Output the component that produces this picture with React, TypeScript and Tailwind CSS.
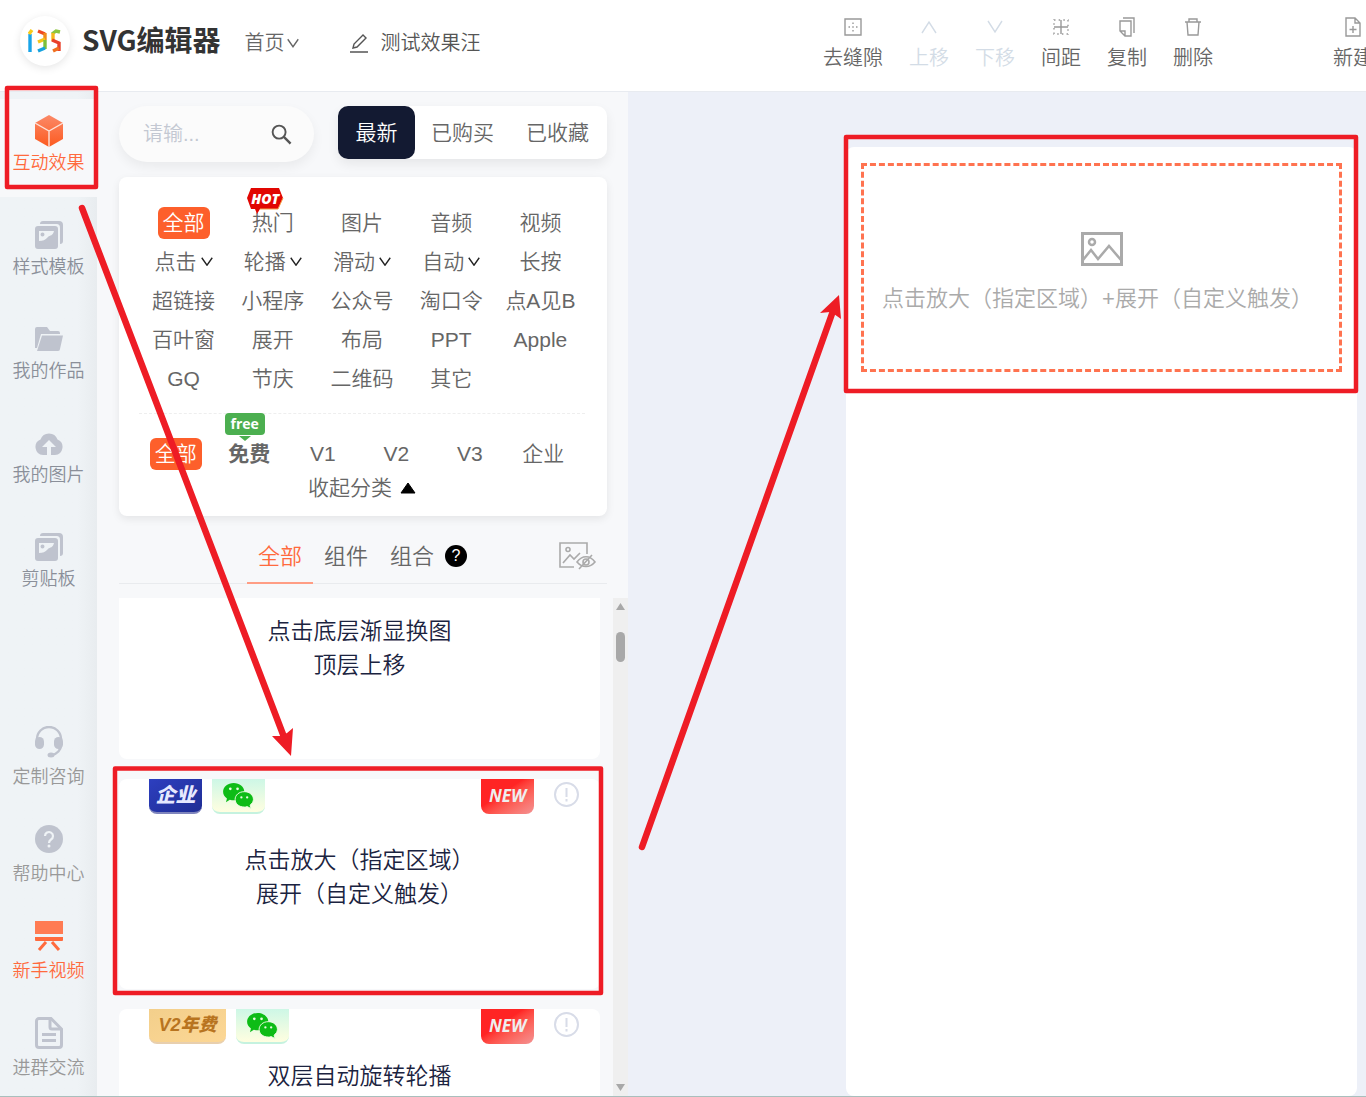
import { useState } from "react";
import type { ReactNode } from "react";
import clsx from "clsx";

const categories = [
  "全部", "热门", "图片", "音频", "视频",
  "点击", "轮播", "滑动", "自动", "长按",
  "超链接", "小程序", "公众号", "淘口令", "点A见B",
  "百叶窗", "展开", "布局", "PPT", "Apple",
  "GQ", "节庆", "二维码", "其它",
];
const withMenu = ["点击", "轮播", "滑动", "自动"];
const levels = ["全部", "免费", "V1", "V2", "V3", "企业"];
const sources = ["最新", "已购买", "已收藏"];
const kinds = ["全部", "组件", "组合"];

function Chevron({ className, up }: { className?: string; up?: boolean }) {
  return (
    <svg viewBox="0 0 16 12" fill="none" stroke="currentColor" strokeWidth="1.8" className={className}>
      <path d={up ? "M1 11 8 1l7 10" : "M1 1l7 10 7-10"} />
    </svg>
  );
}

function CubeIcon() {
  return (
    <svg width="28" height="32" viewBox="0 0 28 32">
      <defs>
        <linearGradient id="cube" x1="0" y1="0" x2="0" y2="1">
          <stop offset="0" stopColor="#fb8a68" />
          <stop offset="1" stopColor="#fc5a1f" />
        </linearGradient>
      </defs>
      <path d="M14 0 28 8v16l-14 8L0 24V8z" fill="url(#cube)" />
      <path d="M0 8l14 8 14-8M14 16v16" fill="none" stroke="#fde3da" strokeWidth="1.4" />
    </svg>
  );
}

function TemplateIcon() {
  return (
    <svg width="28" height="28" viewBox="0 0 28 28" fill="#bfc3ce">
      <path d="M8 0h16a4 4 0 0 1 4 4v16c0 2-1 3-3 3V7c0-3-1-4-4-4H5c0-2 1-3 3-3z" />
      <path
        fillRule="evenodd"
        d="M3 5h17a3 3 0 0 1 3 3v17a3 3 0 0 1-3 3H3a3 3 0 0 1-3-3V8a3 3 0 0 1 3-3zm1 5v10c4 0 6-1 9-4 2-2 5-1 6-6zm3.500 1.500a2 2 0 1 1 0 4 2 2 0 0 1 0-4z"
      />
    </svg>
  );
}

function FolderIcon() {
  return (
    <svg width="28" height="24" viewBox="0 0 28 24" fill="#bfc3ce">
      <path d="M0 21V2a2 2 0 0 1 2-2h10l3 4h8a2 2 0 0 1 2 2v1H6L2 21z" />
      <path d="M7 8.500h21l-3 13.500a2 2 0 0 1-2 2H2z" />
    </svg>
  );
}

function CloudIcon() {
  return (
    <svg width="28" height="23" viewBox="0 0 28 23" fill="#bfc3ce">
      <path d="M12 23H8A8 8 0 0 1 5.500 7.600 9 9 0 0 1 22.500 7.600 8 8 0 0 1 20 23h-4v-8h5l-7-7-7 7h5z" />
    </svg>
  );
}

function HeadsetIcon() {
  return (
    <svg width="28" height="32" viewBox="0 0 28 32" fill="#bfc3ce">
      <path d="M2 14v-1a12 12 0 0 1 24 0v6c0 5-4 9-9 10" fill="none" stroke="#bfc3ce" strokeWidth="2.4" />
      <rect y="11" width="9" height="12" rx="4.500" />
      <rect x="19" y="11" width="9" height="12" rx="4.500" />
      <ellipse cx="16" cy="29" rx="3.500" ry="2.500" />
    </svg>
  );
}

function HelpIcon() {
  return (
    <svg width="28" height="28" viewBox="0 0 28 28">
      <circle cx="14" cy="14" r="14" fill="#bfc3ce" />
      <path d="M10 11a4 4 0 1 1 6 3.500c-1.500 1-2 1.500-2 3.500" fill="none" stroke="#eff3f6" strokeWidth="2.200" />
      <circle cx="14" cy="21" r="1.500" fill="#eff3f6" />
    </svg>
  );
}

function BoardIcon() {
  return (
    <svg width="28" height="30" viewBox="0 0 28 30" fill="#ff6a3d">
      <path d="M0 0h28v13H0z" fill="#ff7b53" />
      <path d="M0 16h28v3a1 1 0 0 1-1 1H1a1 1 0 0 1-1-1z" />
      <path d="M11 21 4 29M17 21l7 8" stroke="#ff6a3d" strokeWidth="3" />
    </svg>
  );
}

function DocIcon() {
  return (
    <svg width="28" height="32" viewBox="0 0 28 32" fill="none" stroke="#bfc3ce" strokeWidth="3">
      <path d="M4 1.500h12L26.500 12v16a2.500 2.500 0 0 1-2.500 2.500H4A2.500 2.500 0 0 1 1.500 28V4A2.500 2.500 0 0 1 4 1.500z" />
      <path d="M15 2v8c0 1.500.5 2 2 2h9M7 17.500h14M7 23.500h14" />
    </svg>
  );
}

const mainNav = [
  { label: "互动效果", icon: <CubeIcon /> },
  { label: "样式模板", icon: <TemplateIcon /> },
  { label: "我的作品", icon: <FolderIcon /> },
  { label: "我的图片", icon: <CloudIcon /> },
  { label: "剪贴板", icon: <TemplateIcon /> },
];

const helpNav = [
  { label: "定制咨询", icon: <HeadsetIcon /> },
  { label: "帮助中心", icon: <HelpIcon /> },
  { label: "新手视频", icon: <BoardIcon />, hot: true },
  { label: "进群交流", icon: <DocIcon /> },
];

const tools = [
  {
    label: "去缝隙",
    icon: (
      <>
        <path d="M2 2h16v16H2z" />
        <path d="M10 5.500v9M5.500 10h9" strokeDasharray="1.500 2.250" />
      </>
    ),
  },
  { label: "上移", icon: <path d="M3 16 10 5l7 11" />, disabled: true },
  { label: "下移", icon: <path d="M3 4l7 11 7-11" />, disabled: true },
  {
    label: "间距",
    icon: (
      <>
        <path d="M10 3v14M3 10h14" />
        <path d="M3 3h14v14H3z" strokeDasharray="1.500 3.160" />
      </>
    ),
  },
  { label: "复制", icon: <path d="M6 1h11v15M3 4h11v15H8l-5-5zM3 14h5v5" /> },
  { label: "删除", icon: <path d="M2 5h16M6 5V2h8v3M4 5l1 13h10l1-13" /> },
];

function Logo() {
  return (
    <svg width="34" height="24" viewBox="0 0 34 24" fill="none" strokeWidth="3.400">
      <path d="M2 5v18" stroke="#18a4e8" />
      <path d="M1 5l3-4" stroke="#f7c91b" />
      <path d="M10 2l7 3" stroke="#ef4a23" />
      <path d="M17 4v7" stroke="#f08a1d" />
      <path d="M17 10l-7 3" stroke="#f5c518" />
      <path d="M17 11v9" stroke="#7cbf3a" />
      <path d="M17 19l-7 3" stroke="#16a2de" />
      <path d="M32 3l-4-1-4 3" stroke="#8cc63f" />
      <path d="M25 4v8" stroke="#f5b81c" />
      <path d="M24 11l7 3v8" stroke="#e9402b" />
      <path d="M31 19l-6 3" stroke="#f0701f" />
    </svg>
  );
}

function Header() {
  return (
    <header className="flex h-[92px] shrink-0 items-center overflow-hidden border-b border-[#e8ebf0] bg-white pb-1.5">
      <a href="#home" className="-mt-1 ml-5 flex items-center gap-3">
        <span className="flex size-[50px] items-center justify-center rounded-full bg-white shadow-[0_2px_8px_rgba(0,0,0,0.1)]">
          <Logo />
        </span>
        <span className="pb-1 font-['Noto_Sans_CJK_SC',sans-serif] text-[28px] leading-10 font-bold text-[#333]">
          SVG编辑器
        </span>
      </a>
      <button className="ml-6 flex items-center gap-0.5 text-[20px] text-[#666]">
        首页
        <Chevron className="h-2.5 w-3" />
      </button>
      <button className="ml-[50px] flex items-center gap-3 text-[20px] text-[#555]">
        <svg width="20" height="20" viewBox="0 0 20 20" fill="none" stroke="currentColor" strokeWidth="1.400">
          <path d="M1 19h18M4 15l1-4 9-9 3 3-9 9z" />
        </svg>
        测试效果汪
      </button>
      <div className="-mr-[7px] ml-auto flex shrink-0 gap-[26px] pt-1.5">
        {tools.map((tool) => (
          <button
            key={tool.label}
            disabled={tool.disabled}
            className={clsx(
              "flex flex-col items-center gap-[5px] text-[20px] leading-8",
              tool.disabled ? "text-[#d3dce6]" : "text-[#666]"
            )}
          >
            <svg
              width="20"
              height="20"
              viewBox="0 0 20 20"
              fill="none"
              stroke={tool.disabled ? "#d3dce6" : "#999"}
              strokeWidth="1.400"
            >
              {tool.icon}
            </svg>
            {tool.label}
          </button>
        ))}
        <button className="ml-[94px] flex flex-col items-center gap-[5px] text-[20px] leading-8 text-[#666]">
          <svg width="20" height="20" viewBox="0 0 20 20" fill="none" stroke="#999" strokeWidth="1.400">
            <path d="M3 1h9l5 5v13H3zM12 1v5h5M10 9v7M6.500 12.500h7" />
          </svg>
          新建
        </button>
      </div>
    </header>
  );
}

function Sidebar() {
  return (
    <nav className="flex w-[97px] shrink-0 flex-col bg-linear-to-r from-[#eff3f6] from-80% to-[#e8ecef] pt-[7px] pb-4">
      <div className="flex flex-col gap-1.5">
        {mainNav.map((item, i) => (
          <a
            key={item.label}
            href="#nav"
            className={clsx(
              "flex h-[98px] flex-col items-center gap-1 pt-4 text-[18px] leading-6",
              i === 0 ? "bg-[#f7f8fa] text-[#ff6a3d]" : "text-[#8a8f99]"
            )}
          >
            <span className="flex h-8 items-center">{item.icon}</span>
            {item.label}
          </a>
        ))}
      </div>
      <div className="mt-auto flex flex-col gap-[34px]">
        {helpNav.map((item) => (
          <a
            key={item.label}
            href="#help"
            className={clsx(
              "flex flex-col items-center gap-[7px] text-[18px] leading-6",
              item.hot ? "text-[#ff6a3d]" : "text-[#999]"
            )}
          >
            <span className="flex h-8 items-center">{item.icon}</span>
            {item.label}
          </a>
        ))}
      </div>
    </nav>
  );
}

function Filters() {
  const [category, setCategory] = useState("全部");
  const [level, setLevel] = useState("全部");

  return (
    <section className="mt-[15px] rounded-lg bg-white pt-[26px] pr-[22px] pb-[13px] pl-5 text-[21px] text-[#666] shadow-[0_3px_8px_rgba(0,0,0,0.08)]">
      <div className="grid grid-cols-5">
        {categories.map((name) => (
          <div key={name} className="relative flex h-[39px] items-center justify-center">
            <button
              onClick={() => setCategory(name)}
              className={clsx(
                "flex h-8 items-center rounded-md px-[5px] leading-8 whitespace-nowrap",
                category === name && "bg-[#fd5f2b] text-white"
              )}
            >
              {name}
              {withMenu.includes(name) && <Chevron className="ml-1 h-[9px] w-3 text-[#222]" />}
            </button>
            {name === "热门" && (
              <span className="absolute -top-[15px] left-[18px] flex h-6 w-[38px] justify-center">
                <svg width="38" height="26" viewBox="0 0 38 26" className="absolute top-0 left-0">
                  <path d="M5 0h28l4 10-5 11H14l-3 5-2-5H5L1 10z" fill="#e10602" />
                  <path d="M37 10l-5 11H14" fill="none" stroke="#f6a04a" />
                </svg>
                <b className="relative font-['Open_Sans',sans-serif] text-[14px] leading-[21px] font-extrabold text-white italic">
                  HOT
                </b>
              </span>
            )}
          </div>
        ))}
      </div>
      <div className="mt-[15px] grid grid-cols-6 border-t border-dashed border-[#eee] pt-5 pr-[5px]">
        {levels.map((name) => (
          <div key={name} className="relative flex h-[39px] items-center justify-center">
            <button
              onClick={() => setLevel(name)}
              className={clsx(
                "h-8 rounded-md px-[5px] leading-8 whitespace-nowrap",
                level === name && "bg-[#fd5f2b] text-white",
                name === "免费" && "font-bold"
              )}
            >
              {name}
            </button>
            {name === "免费" && (
              <span className="absolute -top-[21px] left-3 flex flex-col items-center">
                <b className="h-[22px] rounded-sm bg-[#4caf50] px-1.5 font-['Open_Sans',sans-serif] text-[14px] leading-[21px] font-bold text-white">
                  free
                </b>
                <svg width="12" height="6" viewBox="0 0 12 6">
                  <path d="M0 1h12L6 6z" fill="#4caf50" />
                </svg>
              </span>
            )}
          </div>
        ))}
      </div>
      <button className="mx-auto flex h-[30px] items-center gap-2">
        收起分类
        <svg width="16" height="12" viewBox="0 0 16 12">
          <path d="M8 1l7 10H1z" stroke="#000" strokeLinejoin="round" />
        </svg>
      </button>
    </section>
  );
}

function WechatBadge() {
  return (
    <span className="flex h-[35px] w-[53px] items-center justify-center rounded-b-lg border-b-2 border-[#c5f2df] bg-linear-to-b from-[#cdf7e6] to-[#fffee0]">
      <svg width="31" height="26" viewBox="0 0 32 27" fill="#0dbc16">
        <path d="M11 0c6 0 11 4 11 9S17 18 11 18c-1.500 0-2.500-.2-4-.6L3 20l1-4C1.500 14 0 12 0 9c0-5 5-9 11-9z" />
        <path
          d="M22 9c5.500 0 9.500 3.600 9.500 8 0 2.500-1.500 4.500-3.500 6l1 3.500-4-2c-1 .4-2 .5-3 .5-5.500 0-9.500-3.600-9.500-8s4-8 9.500-8z"
          stroke="#e9fbe0"
        />
        <g fill="#e9fbe0">
          <circle cx="7.500" cy="6" r="1.400" />
          <circle cx="15" cy="6" r="1.400" />
          <circle cx="19" cy="15" r="1.200" />
          <circle cx="25" cy="15" r="1.200" />
        </g>
      </svg>
    </span>
  );
}

function EffectCard({ badge, children }: { badge: ReactNode; children: ReactNode }) {
  return (
    <article className="flex h-[210px] shrink-0 flex-col rounded-lg bg-white">
      <div className="flex items-start gap-2.5 pr-[21px] pl-[30px]">
        {badge}
        <WechatBadge />
        <b className="ml-auto h-[35px] w-[53px] rounded-b-lg bg-linear-to-br from-[#ff2424] from-40% to-[#f39292] font-['Open_Sans',sans-serif] text-[17px] leading-[33px] font-bold text-[#eee] italic">
          NEW
        </b>
        <button aria-label="详情" className="mt-[3px] ml-2.5">
          <svg width="25" height="25" viewBox="0 0 25 25" fill="none" stroke="#d8dce8" strokeWidth="2">
            <circle cx="12.500" cy="12.500" r="11.500" />
            <path d="M12.500 6v9M12.500 17v2.500" />
          </svg>
        </button>
      </div>
      {children}
    </article>
  );
}

function EffectPanel() {
  const [source, setSource] = useState("最新");
  const [kind, setKind] = useState("全部");

  return (
    <aside className="flex w-[531px] shrink-0 flex-col bg-[#f7f8fa] pt-3.5 pl-[22px]">
      <div className="pr-[21px]">
        <div className="flex items-start justify-between">
          <label className="flex h-14 w-[195px] items-center rounded-full bg-[#fbfbfb] pr-[22px] pl-6 shadow-[0_5px_12px_rgba(0,0,0,0.06)]">
            <input
              aria-label="搜索"
              placeholder="请输..."
              className="min-w-0 flex-1 text-[20px] placeholder-[#c3c8d2] outline-none"
            />
            <svg width="21" height="21" viewBox="0 0 22 22" fill="none" stroke="#555" strokeWidth="2">
              <circle cx="8.500" cy="8.500" r="6.800" />
              <path d="M13.500 13.500l7 7" strokeWidth="2.500" />
            </svg>
          </label>
          <div className="flex h-[53px] w-[269px] rounded-[10px] bg-white pr-0.5 text-[21px] text-[#666] shadow-[0_5px_12px_rgba(0,0,0,0.07)]">
            {sources.map((name) => (
              <button
                key={name}
                onClick={() => setSource(name)}
                className={clsx(
                  "rounded-[10px]",
                  source === name ? "w-[77px] bg-[#131a32] text-white" : "flex-1"
                )}
              >
                {name}
              </button>
            ))}
          </div>
        </div>

        <Filters />

        <div className="mt-3 flex h-14 items-center border-b border-[#e9ebee] pl-32 text-[22px] text-[#666]">
          {kinds.map((name) => (
            <button
              key={name}
              onClick={() => setKind(name)}
              className={clsx(
                "-mb-px h-14 border-b-2 px-[11px] pt-0.5",
                kind === name ? "border-[#ff9d84] text-[#ff6a3d]" : "border-transparent"
              )}
            >
              {name}
            </button>
          ))}
          <span className="flex size-[22px] items-center justify-center rounded-full bg-black text-[16px] leading-none text-white">
            ?
          </span>
          <button aria-label="隐藏图片" className="mr-[11px] ml-auto">
            <svg width="37" height="28" viewBox="0 0 37 28" fill="none" stroke="#aaa" strokeWidth="1.600">
              <path d="M15 25H1V1h27v11M4 21l7-8 4 4 6-6" />
              <circle cx="9" cy="7.500" r="2" />
              <path d="M18 20c5-7 13-7 18 0-5 6-13 6-18 0zM33 13 20 27" />
              <circle cx="27" cy="20" r="3" />
            </svg>
          </button>
        </div>
      </div>

      <div className="mt-3.5 flex min-h-0 flex-1">
        <div className="flex flex-1 flex-col gap-5 overflow-hidden pr-[13px] text-center text-[23px] leading-[34px] text-[#1b2340]">
          <article className="h-[161px] shrink-0 rounded-b-lg bg-white pt-4">
            点击底层渐显换图
            <br />
            顶层上移
          </article>
          <EffectCard
            badge={
              <b className="h-[35px] w-[53px] rounded-b-lg border-b-2 border-[#7f85bd] bg-linear-to-br from-[#2d3fc0] to-[#1f2d94] text-[20px] leading-[33px] font-black text-[#e6e8ff] italic">
                企业
              </b>
            }
          >
            <p className="mt-[29px]">
              点击放大（指定区域）
              <br />
              展开（自定义触发）
            </p>
          </EffectCard>
          <EffectCard
            badge={
              <b className="h-[35px] w-[77px] rounded-b-lg border-b-2 border-[#e8cfae] bg-linear-to-br from-[#f3cf8b] to-[#fcd795] text-[18px] leading-[33px] font-black text-[#b8741f] italic">
                V2年费
              </b>
            }
          >
            <p className="mt-[15px]">双层自动旋转轮播</p>
          </EffectCard>
        </div>
        <div className="flex w-[15px] flex-col items-center bg-[#efefef] py-[5px]">
          <svg width="9" height="7" viewBox="0 0 9 7" fill="#a8a8a8">
            <path d="M4.500 0 9 7H0z" />
          </svg>
          <span className="mt-[22px] h-[30px] w-[9px] rounded-full bg-[#a8a8a8]" />
          <svg width="9" height="7" viewBox="0 0 9 7" fill="#a8a8a8" className="mt-auto">
            <path d="M4.500 7 9 0H0z" />
          </svg>
        </div>
      </div>
    </aside>
  );
}

function Canvas() {
  return (
    <main className="flex flex-1 bg-[#edf0f8] pt-[55px] pr-[9px] pl-[218px]">
      <div className="flex-1 rounded-lg bg-white px-[15px] py-4">
        <div className="flex h-[209px] flex-col items-center justify-center gap-[17px] border-3 border-dashed border-[#ff7350] pt-3 text-[22px] leading-8 text-[#aaa]">
          <svg width="42" height="34" viewBox="0 0 42 34" fill="none" stroke="#aaa" strokeWidth="3">
            <path d="M1.500 1.500h39v31h-39z" />
            <path d="M2 28l8-10 7 9 11-13 12 14" strokeWidth="2.500" />
            <circle cx="11" cy="10" r="3" strokeWidth="2.500" />
          </svg>
          <p className="pr-2 whitespace-nowrap">点击放大（指定区域）+展开（自定义触发）</p>
        </div>
      </div>
    </main>
  );
}

// Red tutorial boxes and arrows drawn over the editor
function Annotations() {
  return (
    <svg
      width="1366"
      height="1097"
      viewBox="0 0 1366 1097"
      fill="none"
      stroke="#ee1c25"
      strokeWidth="4.500"
      strokeLinejoin="round"
      className="pointer-events-none absolute top-0 left-0"
    >
      <rect x="7" y="88" width="89" height="99" />
      <rect x="115" y="768.500" width="486" height="224.500" />
      <rect x="846" y="137" width="510" height="254" />
      <path d="M82 208 284 737M642 847 833 311" strokeWidth="6.500" strokeLinecap="round" />
      <g fill="#ee1c25" stroke="none">
        <path d="M291 756 272 736l9 0 6-3 6-5z" />
        <path d="M839 295 820 313l10-1 4 2 7 5z" />
      </g>
    </svg>
  );
}

export default function App() {
  return (
    <div className="relative flex h-screen flex-col overflow-hidden border-b border-[#a9bfbd] font-['Liberation_Sans','Noto_Sans_CJK_SC',sans-serif] font-[350]">
      <Header />
      <div className="flex min-h-0 flex-1">
        <Sidebar />
        <EffectPanel />
        <Canvas />
      </div>
      <Annotations />
    </div>
  );
}
